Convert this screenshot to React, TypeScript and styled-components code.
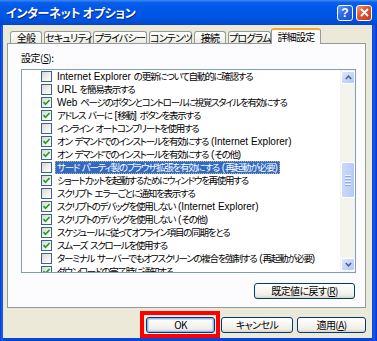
import React from "react";
import styled, { createGlobalStyle } from "styled-components";

const GlobalStyle = createGlobalStyle`
  html, body { margin: 0; padding: 0; }
  body {
    width: 377px; height: 341px; overflow: hidden;
    font-family: "Noto Sans CJK JP", "Liberation Sans", sans-serif;
    font-feature-settings: "palt";
  }
`;

const Window = styled.div`
  width: 377px;
  height: 341px;
  display: flex;
  flex-direction: column;
  background: #0a45d8;
`;

const TitleBar = styled.div`
  height: 25px;
  flex: none;
  display: flex;
  align-items: center;
  padding: 0 5px 0 6px;
  background: linear-gradient(180deg, #3b8cf8 0%, #0b5fe9 10%, #0058ea 30%, #0054e2 70%, #004ed6 90%, #0a43c2 100%);
`;

const Title = styled.div`
  flex: 1;
  color: #fff;
  font-weight: bold;
  font-size: 12px;
  letter-spacing: -0.3px;
  text-shadow: 1px 1px 0 #0a2a88;
`;

const CapButton = styled.div<{ $kind: "help" | "close" }>`
  width: 16px;
  height: 16px;
  box-sizing: border-box;
  margin-left: 3px;
  border: 1px solid #fff;
  border-radius: 3px;
  display: flex;
  align-items: center;
  justify-content: center;
  color: #fff;
  font-family: "Liberation Sans", sans-serif;
  font-weight: bold;
  font-size: 12px;
  background: ${(p) =>
    p.$kind === "help"
      ? "linear-gradient(135deg, #6a9cf7 0%, #2d67e6 45%, #1c4fd0 100%)"
      : "linear-gradient(135deg, #f09a7c 0%, #e05a33 40%, #c4381a 100%)"};
`;

const Frame = styled.div`
  flex: 1;
  display: flex;
  padding: 0 5px 3px 3px;
  min-height: 0;
  background: linear-gradient(90deg, #0831d9 0px, #166aee 2px, #0a45d8 3px, #0a45d8 calc(100% - 5px), #1a5ae8 calc(100% - 3px), #0831d9 100%);
`;

const Body = styled.div`
  flex: 1;
  background: #ece9d8;
  display: flex;
  flex-direction: column;
  padding: 3px 6px 0 4px;
`;

const TabStrip = styled.div`
  height: 15px;
  display: flex;
  align-items: flex-end;
  gap: 2px;
  padding-left: 3px;
  position: relative;
  z-index: 1;
`;

const Tab = styled.div<{ $w: number; $active?: boolean }>`
  width: ${(p) => p.$w}px;
  box-sizing: border-box;
  height: ${(p) => (p.$active ? 16 : 12)}px;
  margin-bottom: ${(p) => (p.$active ? -1 : 0)}px;
  margin-left: ${(p) => (p.$active ? -2 : 0)}px;
  border: 1px solid #919b9c;
  border-bottom: none;
  border-top: ${(p) => (p.$active ? "2px solid #f4a73a" : "1px solid #919b9c")};
  border-radius: 3px 3px 0 0;
  background: ${(p) => (p.$active ? "#fcfcfe" : "linear-gradient(180deg, #ffffff 0%, #f6f5f1 50%, #ebeae4 100%)")};
  font-size: 10px;
  letter-spacing: -0.8px;
  line-height: ${(p) => (p.$active ? 13 : 11)}px;
  text-align: center;
  color: #000;
  white-space: nowrap;
`;

const Panel = styled.div`
  width: 359px;
  height: 265px;
  box-sizing: border-box;
  border: 1px solid #919b9c;
  background: #fcfcfe;
  display: flex;
  flex-direction: column;
  padding: 7px 9px 0 13px;
`;

const Label = styled.div`
  font-size: 10px;
  letter-spacing: -0.5px;
  line-height: 13px;
  height: 13px;
  color: #000;
  margin-bottom: 5px;
`;

const ListBox = styled.div`
  width: 335px;
  height: 204px;
  box-sizing: border-box;
  border: 1px solid #7f9db9;
  background: #fff;
  display: flex;
`;

const Items = styled.div`
  flex: 1;
  overflow: hidden;
  display: flex;
  flex-direction: column;
`;

const Row = styled.div`
  height: 13px;
  flex: none;
  display: flex;
  align-items: center;
  padding-left: 19px;
`;

const Check = styled.div`
  width: 11px;
  height: 11px;
  box-sizing: border-box;
  border: 1px solid #3a6391;
  background: linear-gradient(135deg, #d8d8d2 0%, #f0f0ec 55%, #ffffff 100%);
  display: flex;
  align-items: center;
  justify-content: center;
  flex: none;
`;

const RowText = styled.span<{ $sel?: boolean }>`
  margin-left: 3px;
  padding: 0 2px;
  height: 13px;
  line-height: 13px;
  font-size: 9.5px;
  letter-spacing: -1.25px;
  white-space: pre;
  box-sizing: border-box;
  color: ${(p) => (p.$sel ? "#fff" : "#000")};
  background: ${(p) => (p.$sel ? "#316ac5" : "transparent")};
  outline: ${(p) => (p.$sel ? "1px dotted #c9b874" : "none")};
  outline-offset: -1px;
`;

const Latin = styled.span`
  font-family: "Liberation Sans", sans-serif;
  font-size: 10px;
  letter-spacing: 0;
`;

const ScrollBar = styled.div`
  width: 15px;
  flex: none;
  display: flex;
  flex-direction: column;
  background: #f4f3ee;
  padding: 1px 0 1px 1px;
  box-sizing: border-box;
`;

const ScrollBtn = styled.div`
  height: 13px;
  flex: none;
  box-sizing: border-box;
  border: 1px solid #fff;
  border-radius: 2px;
  background: linear-gradient(135deg, #dde6fb 0%, #c5d5fb 50%, #b4c8f6 100%);
  display: flex;
  align-items: center;
  justify-content: center;
`;

const Track = styled.div`
  flex: 1;
  display: flex;
  flex-direction: column;
`;

const Thumb = styled.div`
  height: 36px;
  box-sizing: border-box;
  border: 1px solid #fff;
  border-radius: 2px;
  background: linear-gradient(90deg, #c9d8fc 0%, #c1d2fb 50%, #b6c9f7 100%);
  display: flex;
  align-items: center;
  justify-content: center;
`;

const Grip = styled.div`
  width: 6px;
  display: flex;
  flex-direction: column;
  gap: 1px;
  & > i { display: block; height: 1px; background: #eef4fe; border-bottom: 1px solid #8caee8; }
`;

const ResetRow = styled.div`
  display: flex;
  justify-content: flex-end;
  margin-top: 10px;
  padding-right: 1px;
`;

const Button = styled.div<{ $w: number; $default?: boolean }>`
  width: ${(p) => p.$w}px;
  height: 16px;
  box-sizing: border-box;
  border: 1px solid #003c74;
  border-radius: 3px;
  background: linear-gradient(180deg, #ffffff 0%, #f7f6f2 45%, #eeede7 80%, #d9d4c8 100%);
  box-shadow: ${(p) => (p.$default ? "inset 0 0 0 1px #98b8ee, inset 0 0 0 2px #cbdaf6" : "none")};
  font-size: 10px;
  letter-spacing: -0.6px;
  line-height: 14px;
  text-align: center;
  color: #000;
  white-space: nowrap;
  position: relative;
`;

const ButtonRow = styled.div`
  display: flex;
  justify-content: flex-end;
  margin-top: 9px;
`;

const Highlight = styled.div`
  position: relative;
  margin-right: 6px;
  &::after {
    content: "";
    position: absolute;
    left: -6px;
    top: -6px;
    right: -5px;
    bottom: -5px;
    border: 4px solid #ff0000;
    pointer-events: none;
  }
`;

const Spacer = styled.div<{ $h: number }>`
  height: ${(p) => p.$h}px;
  flex: none;
`;

const Gap = styled.div<{ $w: number }>`
  width: ${(p) => p.$w}px;
  flex: none;
`;

const rows: { t: string; c: boolean; sel?: boolean }[] = [
  { t: "Internet Explorer の更新について自動的に確認する", c: false },
  { t: "URL を簡易表示する", c: false },
  { t: "Web ページのボタンとコントロールに視覚スタイルを有効にする", c: true },
  { t: "アドレス バーに [移動] ボタンを表示する", c: true },
  { t: "インライン オートコンプリートを使用する", c: false },
  { t: "オン デマンドでのインストールを有効にする (Internet Explorer)", c: true },
  { t: "オン デマンドでのインストールを有効にする (その他)", c: true },
  { t: "サード パーティ製のブラウザ拡張を有効にする (再起動が必要)", c: false, sel: true },
  { t: "ショートカットを起動するためにウィンドウを再使用する", c: true },
  { t: "スクリプト エラーごとに通知を表示する", c: false },
  { t: "スクリプトのデバッグを使用しない (Internet Explorer)", c: true },
  { t: "スクリプトのデバッグを使用しない (その他)", c: true },
  { t: "スケジュールに従ってオフライン項目の同期をとる", c: true },
  { t: "スムーズ スクロールを使用する", c: true },
  { t: "ターミナル サーバーでもオフスクリーンの複合を強制する (再起動が必要)", c: false },
  { t: "ダウンロードの完了時に通知する", c: true },
];

const tabs = [
  { l: "全般", w: 32 },
  { l: "セキュリティ", w: 47 },
  { l: "プライバシー", w: 54 },
  { l: "コンテンツ", w: 43 },
  { l: "接続", w: 32 },
  { l: "プログラム", w: 43 },
];

const latinRe = /([A-Za-z0-9()\[\]. ]+)/;

const Mixed = ({ text }: { text: string }) => (
  <>
    {text.split(latinRe).map((part, i) =>
      part === "" ? null : i % 2 === 1 ? <Latin key={i}>{part}</Latin> : <React.Fragment key={i}>{part}</React.Fragment>
    )}
  </>
);

const CheckMark = () => (
  <svg width="9" height="9" viewBox="0 0 9 9">
    <path d="M1.5 4.2 L3.5 6.3 L7.6 2" fill="none" stroke="#21a121" strokeWidth="1.7" />
  </svg>
);

const Arrow = ({ up }: { up?: boolean }) => (
  <svg width="7" height="5" viewBox="0 0 7 5">
    <path d={up ? "M0.8 4 L3.5 1.2 L6.2 4" : "M0.8 1 L3.5 3.8 L6.2 1"} fill="none" stroke="#4d6185" strokeWidth="1.5" />
  </svg>
);

export default function App() {
  return (
    <>
      <GlobalStyle />
      <Window>
        <TitleBar>
          <Title>インターネット オプション</Title>
          <CapButton $kind="help">?</CapButton>
          <CapButton $kind="close">
            <svg width="9" height="9" viewBox="0 0 9 9">
              <path d="M1 1 L8 8 M8 1 L1 8" stroke="#fff" strokeWidth="1.8" />
            </svg>
          </CapButton>
        </TitleBar>
        <Frame>
          <Body>
            <TabStrip>
              {tabs.map((t) => (
                <Tab key={t.l} $w={t.w}>{t.l}</Tab>
              ))}
              <Tab $w={50} $active>詳細設定</Tab>
            </TabStrip>
            <Panel>
              <Label>
                設定(<u>S</u>):
              </Label>
              <ListBox>
                <Items>
                  {rows.map((r) => (
                    <Row key={r.t}>
                      <Check>{r.c && <CheckMark />}</Check>
                      <RowText $sel={r.sel}>
                        <Mixed text={r.t} />
                      </RowText>
                    </Row>
                  ))}
                </Items>
                <ScrollBar>
                  <ScrollBtn>
                    <Arrow up />
                  </ScrollBtn>
                  <Track>
                    <Spacer $h={78} />
                    <Thumb>
                      <Grip>
                        <i />
                        <i />
                        <i />
                        <i />
                      </Grip>
                    </Thumb>
                  </Track>
                  <ScrollBtn>
                    <Arrow />
                  </ScrollBtn>
                </ScrollBar>
              </ListBox>
              <ResetRow>
                <Button $w={101}>
                  既定値に戻す(<u>R</u>)
                </Button>
              </ResetRow>
            </Panel>
            <ButtonRow>
              <Highlight>
                <Button $w={69} $default>OK</Button>
              </Highlight>
              <Button $w={72}>キャンセル</Button>
              <Gap $w={4} />
              <Button $w={69}>
                適用(<u>A</u>)
              </Button>
            </ButtonRow>
          </Body>
        </Frame>
      </Window>
    </>
  );
}
